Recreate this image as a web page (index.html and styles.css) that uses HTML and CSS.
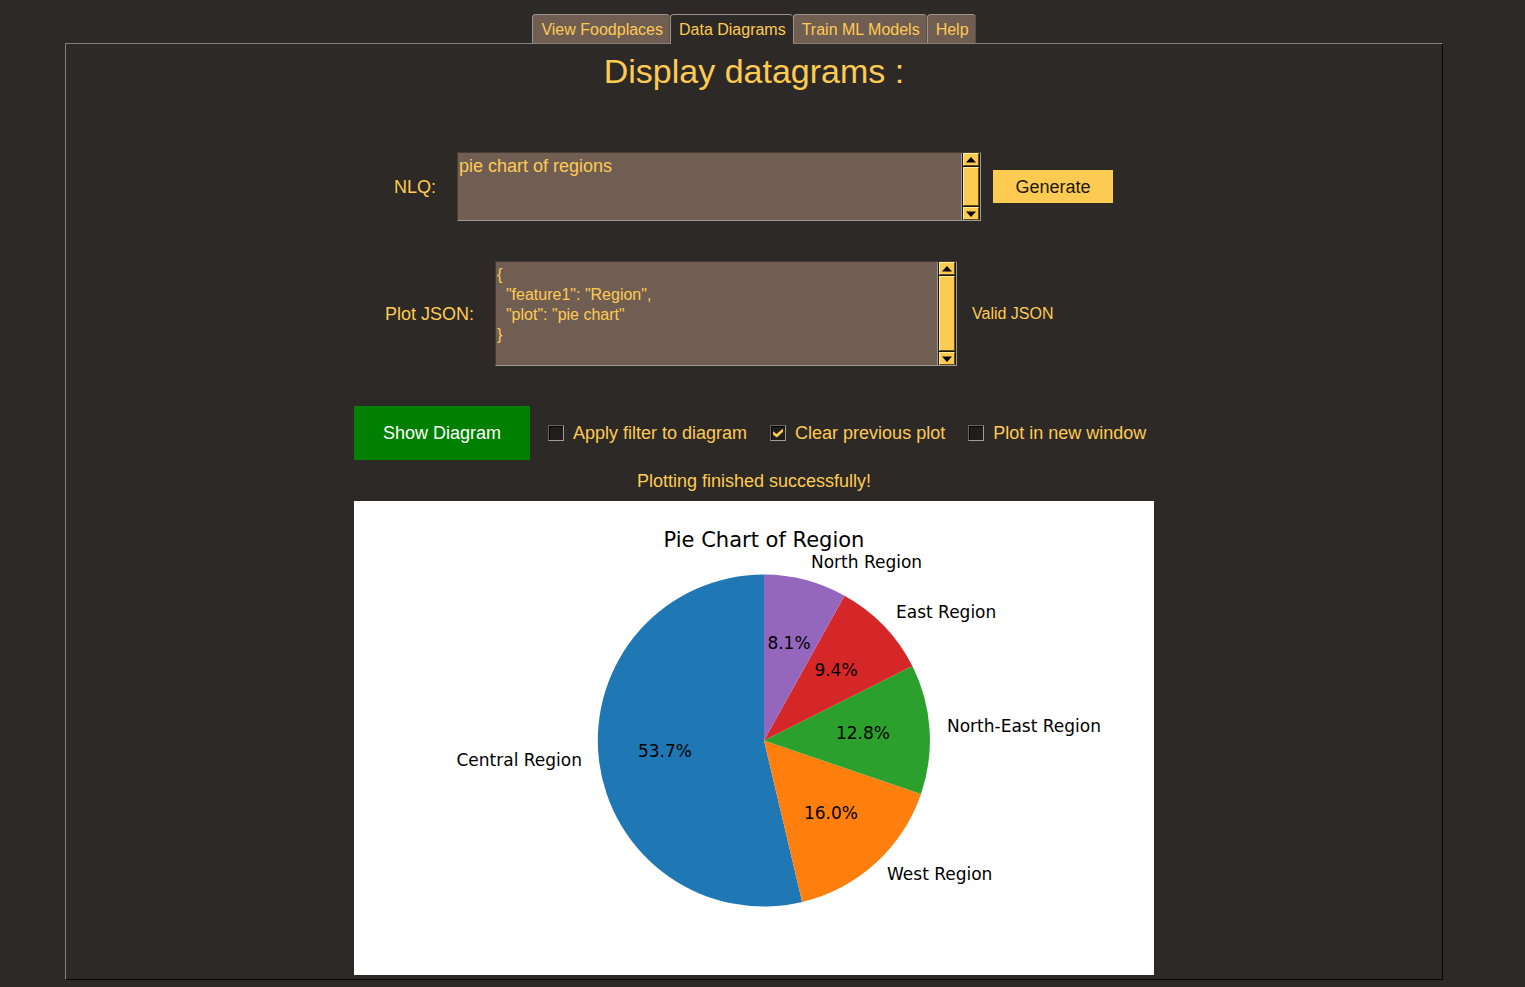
FILE: index.html
```html
<!DOCTYPE html>
<html lang="en">
<head>
<meta charset="utf-8">
<meta name="viewport" content="width=device-width, initial-scale=1">
<title>Data Diagrams</title>
<link rel="stylesheet" href="styles.css">
</head>
<body>
<div class="app">
  <div class="tabs" role="tablist">
    <button class="tab" role="tab" aria-selected="false">View Foodplaces</button>
    <button class="tab tab-active" role="tab" aria-selected="true" aria-controls="panel">Data Diagrams</button>
    <button class="tab" role="tab" aria-selected="false">Train ML Models</button>
    <button class="tab" role="tab" aria-selected="false">Help</button>
  </div>
  <main class="panel" id="panel" role="tabpanel">
    <h1 class="title">Display datagrams :</h1>

    <div class="row row-query">
      <label class="row-label" for="nlq">NLQ:</label>
      <div class="field field-query">
        <textarea class="field-text" id="nlq" spellcheck="false">pie chart of regions</textarea>
        <div class="scroll">
          <button class="scroll-arrow" aria-label="Scroll query up"><svg viewBox="0 0 10 6"><path d="M5 0 10 5.500H0z"/></svg></button>
          <div class="scroll-thumb"></div>
          <button class="scroll-arrow" aria-label="Scroll query down"><svg viewBox="0 0 10 6"><path d="M0 .5H10L5 6z"/></svg></button>
        </div>
      </div>
      <button class="generate">Generate</button>
    </div>

    <div class="row row-json">
      <label class="row-label" for="json">Plot JSON:</label>
      <div class="field field-json">
        <textarea class="field-text field-code" id="json" spellcheck="false">{
  "feature1": "Region",
  "plot": "pie chart"
}</textarea>
        <div class="scroll">
          <button class="scroll-arrow" aria-label="Scroll JSON up"><svg viewBox="0 0 10 6"><path d="M5 0 10 5.500H0z"/></svg></button>
          <div class="scroll-thumb"></div>
          <button class="scroll-arrow" aria-label="Scroll JSON down"><svg viewBox="0 0 10 6"><path d="M0 .5H10L5 6z"/></svg></button>
        </div>
      </div>
      <output class="json-state" for="json">Valid JSON</output>
    </div>

    <div class="plot">
      <div class="actions">
        <button class="show">Show Diagram</button>
        <label class="check"><input class="check-box" type="checkbox">Apply filter to diagram</label>
        <label class="check"><input class="check-box" type="checkbox" checked>Clear previous plot</label>
        <label class="check"><input class="check-box" type="checkbox">Plot in new window</label>
      </div>
      <p class="status" role="status">Plotting finished successfully!</p>
      <svg class="chart" viewBox="0 0 800 474" role="img" aria-label="Pie Chart of Region">
        <path class="central" d="M410 239.500V73.500A166 166 0 1 0 448.200 401z"/>
        <path class="west" d="M410 239.500 448.200 401A166 166 0 0 0 567 293z"/>
        <path class="north-east" d="M410 239.500 567 293A166 166 0 0 0 558.400 165z"/>
        <path class="east" d="M410 239.500 558.400 165A166 166 0 0 0 490.500 94.700z"/>
        <path class="north" d="M410 239.500 490.500 94.700A166 166 0 0 0 410 73.500z"/>
        <text class="chart-title" x="410" y="46">Pie Chart of Region</text>
        <text class="end" x="228" y="265">Central Region</text>
        <text x="533" y="379">West Region</text>
        <text x="593" y="231">North-East Region</text>
        <text x="542" y="117">East Region</text>
        <text x="457" y="67">North Region</text>
        <text class="percent" x="311" y="256">53.7%</text>
        <text class="percent" x="477" y="318">16.0%</text>
        <text class="percent" x="509" y="238">12.8%</text>
        <text class="percent" x="482" y="175">9.4%</text>
        <text class="percent" x="435" y="148">8.1%</text>
      </svg>
    </div>
  </main>
</div>
</body>
</html>
```
FILE: styles.css
```css
* {
  box-sizing: border-box;
}

body {
  margin: 0;
  background: #2d2926;
  color: #fecb52;
  font: 18px/24px "Liberation Sans", Arial, sans-serif;
}

button,
textarea {
  margin: 0;
  border: 0;
  border-radius: 0;
  font: inherit;
}

.app {
  display: flex;
  flex-direction: column;
  min-height: 100vh;
  padding: 14px 82px 7px 65px;
}

/* Tabs */
.tabs {
  display: flex;
  justify-content: center;
}

.tab {
  height: 29px;
  padding: 2px 7px 0 8px;
  border: solid #9b9490;
  border-width: 1px 0 0 1px;
  border-radius: 4px 4px 0 0;
  background: #705e52;
  color: #fecb52;
  font-size: 16px;
  box-shadow: inset -1px 0 #5b4d44;
}

.tab-active {
  position: relative;
  height: 30px;
  margin-bottom: -1px;
  padding-top: 1px;
  padding-bottom: 1px;
  background: #2d2926;
  box-shadow: none;
}

/* Panel */
.panel {
  flex: 1;
  display: flex;
  flex-direction: column;
  align-items: center;
  padding: 0 8px 4px;
  border: 1px solid;
  border-color: #85807c #080706 #080706 #85807c;
}

.title {
  margin: 7px 0 61px;
  font-size: 34px;
  font-weight: 400;
  line-height: 40px;
}

.row {
  display: flex;
  align-items: center;
  width: 100%;
}

.row-label {
  margin-right: 21px;
}

.row-query {
  max-width: 720px;
  margin-bottom: 40px;
}

.row-json {
  max-width: 738px;
  margin-bottom: 40px;
}

.field {
  display: flex;
  background: #705e52;
  border: 1px solid;
  border-color: #483c35 #a19994 #a19994 #483c35;
}

.field-query {
  flex: 0 1 524px;
  height: 69px;
}

.field-json {
  flex: 0 1 462px;
  height: 105px;
}

.field-text {
  flex: 1;
  min-width: 0;
  padding: 1px;
  background: transparent;
  color: #fecb52;
  resize: none;
  overflow: hidden;
  outline: 0;
}

.field-code {
  font-size: 16px;
  line-height: 20px;
  padding-top: 3px;
}

.scroll {
  display: flex;
  flex-direction: column;
  gap: 1px;
  width: 19px;
  padding: 0 1px;
  background: #1c1712;
  border-left: 1px solid #a19994;
}

.scroll-arrow,
.scroll-thumb {
  background: #fecb52;
  border: 1px solid;
  border-color: #ffee9b #5f4c1f #5f4c1f #ffee9b;
}

.scroll-arrow {
  display: grid;
  place-items: center;
  height: 13px;
  padding: 0;
}

.scroll-arrow svg {
  width: 10px;
  height: 6px;
}

.scroll-thumb {
  flex: 1;
}

.generate {
  width: 120px;
  height: 33px;
  margin-left: 12px;
  padding: 0;
  background: #fecb52;
  color: #1b1712;
}

.json-state {
  margin-left: 15px;
  font-size: 16px;
}

/* Plot */
.plot {
  width: 100%;
  max-width: 800px;
}

.actions {
  display: flex;
  align-items: center;
}

.show {
  width: 176px;
  height: 54px;
  padding: 0;
  background: #008000;
  color: #fff;
}

.check {
  display: flex;
  align-items: center;
  gap: 9px;
  margin-left: 23px;
}

.show + .check {
  margin-left: 18px;
}

.check-box {
  appearance: none;
  display: grid;
  place-items: center;
  width: 16px;
  height: 16px;
  margin: 0;
  border: 1px solid;
  border-color: #68625f #a39d99 #a39d99 #68625f;
  background: #211d1b;
  box-shadow: inset 1px 1px #080706;
}

.check-box:checked::before {
  content: "";
  width: 10px;
  height: 9px;
  background: #fecb52;
  clip-path: polygon(0 30%, 35% 60%, 100% 0, 100% 36%, 38% 100%, 0 70%);
}

.status {
  margin: 9px 0 8px;
  text-align: center;
}

.chart {
  display: block;
  width: 100%;
  background: #fff;
  font-family: "DejaVu Sans", sans-serif;
  font-size: 17px;
}

.chart-title {
  font-size: 21px;
  text-anchor: middle;
}

.percent {
  text-anchor: middle;
}

.end {
  text-anchor: end;
}

.central {
  fill: #1f77b4;
}

.west {
  fill: #ff7f0e;
}

.north-east {
  fill: #2ca02c;
}

.east {
  fill: #d62728;
}

.north {
  fill: #9467bd;
}
```
